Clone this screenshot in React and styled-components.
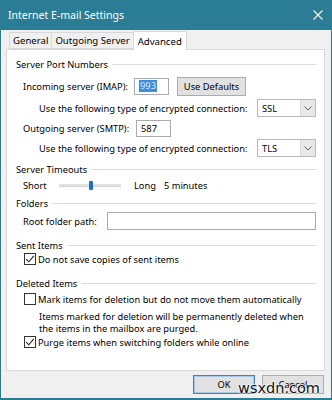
import React from 'react';
import styled, { createGlobalStyle } from 'styled-components';

const GlobalStyle = createGlobalStyle`
  html, body {
    margin: 0;
    padding: 0;
    background: #ffffff;
  }
  * {
    box-sizing: border-box;
  }
`;

const Window = styled.div`
  position: relative;
  width: 332px;
  height: 400px;
  background: #f0f0f0;
  border: 1px solid #2b7d96;
  border-top: none;
  border-bottom-width: 2px;
  font-family: 'Noto Sans', 'Liberation Sans', sans-serif;
  font-size: 9.3px;
  color: #000;
  display: flex;
  flex-direction: column;
  overflow: hidden;
`;

const TitleBar = styled.div`
  height: 30px;
  margin: 0 -1px;
  background: #2b7d96;
  color: #fff;
  display: flex;
  align-items: center;
  justify-content: space-between;
  padding: 0 9px 0 8px;
  font-size: 10.5px;
`;

const Close = styled.svg`
  width: 10px;
  height: 10px;
`;

const Body = styled.div`
  flex: 1;
  padding: 0 6px 0 5px;
  display: flex;
  flex-direction: column;
`;

const TabStrip = styled.div`
  display: flex;
  align-items: flex-end;
  height: 19px;
  padding-left: 3px;
`;

const Tab = styled.div`
  height: ${({ $active }) => ($active ? '19px' : '17px')};
  padding: 0 ${({ $active }) => ($active ? '4px' : '3px')};
  display: flex;
  align-items: center;
  background: ${({ $active }) => ($active ? '#fff' : '#f0f0f0')};
  border: 1px solid #d9d9d9;
  border-bottom: ${({ $active }) => ($active ? 'none' : '1px solid #d9d9d9')};
  margin-left: ${({ $first }) => ($first ? '0' : '-1px')};
  position: relative;
  z-index: ${({ $active }) => ($active ? 2 : 1)};
  margin-bottom: ${({ $active }) => ($active ? '-1px' : '0')};
  font-size: 9.6px;
`;

const Panel = styled.div`
  height: 322px;
  background: #fff;
  border: 1px solid #d9d9d9;
  padding: 6px 8px 0 9px;
  display: flex;
  flex-direction: column;
`;

const Header = styled.div`
  height: 16px;
  margin-top: ${({ $mt }) => $mt || 0}px;
  display: flex;
  align-items: center;
  gap: 4px;
  color: #000;
  white-space: nowrap;

  &::after {
    content: '';
    flex: 1;
    height: 1px;
    background: #dcdcdc;
  }
`;

const Row = styled.div`
  height: ${({ $h }) => $h || 18}px;
  margin-top: ${({ $mt }) => $mt || 0}px;
  padding-left: ${({ $indent }) => $indent || 7}px;
  display: flex;
  align-items: center;
`;

const Label = styled.span`
  width: ${({ $w }) => ($w ? `${$w}px` : 'auto')};
  flex-shrink: 0;
  white-space: nowrap;
`;

const TextBox = styled.div`
  width: ${({ $w }) => ($w ? `${$w}px` : 'auto')};
  flex: ${({ $grow }) => ($grow ? 1 : 'none')};
  height: ${({ $h }) => $h || 17}px;
  border: 1px solid #a9abb2;
  background: #fff;
  display: flex;
  align-items: center;
  padding-left: 4px;
`;

const Selected = styled.span`
  background: #3b8ee0;
  color: #dcebfb;
  padding: 0 1px;
  line-height: 12px;
`;

const Button = styled.div`
  width: ${({ $w }) => $w}px;
  height: ${({ $h }) => $h || 19}px;
  margin-left: ${({ $ml }) => $ml || 0}px;
  background: #e1e1e1;
  border: 1px solid ${({ $default }) => ($default ? '#3d84c6' : '#adadad')};
  box-shadow: ${({ $default }) => ($default ? 'inset 0 0 0 1px #a9c9e8' : 'none')};
  display: flex;
  align-items: center;
  justify-content: center;
`;

const Select = styled.div`
  width: 59px;
  height: 18px;
  margin-left: auto;
  border: 1px solid #b9b9b9;
  background: #fff;
  display: flex;
  align-items: stretch;
`;

const SelectValue = styled.span`
  flex: 1;
  display: flex;
  align-items: center;
  padding-left: 4px;
`;

const SelectArrow = styled.span`
  width: 15px;
  background: #e8e8e8;
  border-left: 1px solid #dadada;
  display: flex;
  align-items: center;
  justify-content: center;
`;

const Track = styled.div`
  position: relative;
  width: 62px;
  height: 3px;
  margin: 0 13px 0 12px;
  background: #e2e2e2;
  border-bottom: 1px solid #d4d4d4;
`;

const Thumb = styled.span`
  position: absolute;
  left: 30px;
  top: -3px;
  width: 4px;
  height: 9px;
  border-radius: 1px;
  background: #1c6fc4;
`;

const Check = styled.div`
  width: 12px;
  height: 12px;
  border: 1px solid #333;
  background: #fff;
  margin-right: 2px;
  display: flex;
  align-items: center;
  justify-content: center;
  flex-shrink: 0;
`;

const Note = styled.div`
  margin-top: ${({ $mt }) => $mt || 0}px;
  padding-left: 23px;
  line-height: 11.5px;
  white-space: nowrap;
`;

const Footer = styled.div`
  display: flex;
  justify-content: flex-end;
  gap: 7px;
  padding: 4px 1px 0 0;
`;

const Watermark = styled.span`
  position: absolute;
  right: 11px;
  bottom: 2px;
  font-family: 'DejaVu Sans', 'Liberation Sans', sans-serif;
  font-size: 14.5px;
  color: #111;
  text-shadow: 0 0 2px #fff, 0 0 2px #fff, 0 0 2px #fff;
`;

const CheckBox = ({ checked }) => (
  <Check>
    {checked && (
      <svg width="10" height="10" viewBox="0 0 10 10">
        <path d="M1.2 5.2 L3.8 7.8 L8.8 1.8" fill="none" stroke="#222" strokeWidth="1.1" />
      </svg>
    )}
  </Check>
);

const Chevron = () => (
  <svg width="8" height="5" viewBox="0 0 8 5">
    <path d="M0.5 0.5 L4 4 L7.5 0.5" fill="none" stroke="#606060" strokeWidth="1" />
  </svg>
);

const EncryptionRow = ({ value, mt }) => (
  <Row $mt={mt} $indent={23}>
    <Label>Use the following type of encrypted connection:</Label>
    <Select>
      <SelectValue>{value}</SelectValue>
      <SelectArrow>
        <Chevron />
      </SelectArrow>
    </Select>
  </Row>
);

const App = () => (
  <>
    <GlobalStyle />
    <Window>
      <TitleBar>
        <span>Internet E-mail Settings</span>
        <Close viewBox="0 0 10 10">
          <path d="M0.5 0.5 L9.5 9.5 M9.5 0.5 L0.5 9.5" stroke="#fff" strokeWidth="1.1" />
        </Close>
      </TitleBar>
      <Body>
        <TabStrip>
          <Tab $first>General</Tab>
          <Tab>Outgoing Server</Tab>
          <Tab $active>Advanced</Tab>
        </TabStrip>
        <Panel>
          <Header>Server Port Numbers</Header>
          <Row $h={20} $mt={4}>
            <Label $w={111}>Incoming server (IMAP):</Label>
            <TextBox $w={35}>
              <Selected>993</Selected>
            </TextBox>
            <Button $w={69} $ml={8}>Use Defaults</Button>
          </Row>
          <EncryptionRow value="SSL" mt={3} />
          <Row $mt={2}>
            <Label $w={113}>Outgoing server (SMTP):</Label>
            <TextBox $w={35}>587</TextBox>
          </Row>
          <EncryptionRow value="TLS" mt={2} />
          <Header $mt={4}>Server Timeouts</Header>
          <Row $h={16}>
            <Label $w={24}>Short</Label>
            <Track>
              <Thumb />
            </Track>
            <Label $w={30}>Long</Label>
            <Label>5 minutes</Label>
          </Row>
          <Header $mt={2}>Folders</Header>
          <Row $mt={1}>
            <Label $w={84}>Root folder path:</Label>
            <TextBox $grow $h={18} />
          </Row>
          <Header $mt={7}>Sent Items</Header>
          <Row $h={14} $mt={-1} $indent={8}>
            <CheckBox checked />
            <Label>Do not save copies of sent items</Label>
          </Row>
          <Header $mt={9}>Deleted Items</Header>
          <Row $h={14} $mt={1} $indent={8}>
            <CheckBox />
            <Label>Mark items for deletion but do not move them automatically</Label>
          </Row>
          <Note $mt={5}>
            Items marked for deletion will be permanently deleted when
            <br />
            the items in the mailbox are purged.
          </Note>
          <Row $h={14} $mt={1} $indent={8}>
            <CheckBox checked />
            <Label>Purge items when switching folders while online</Label>
          </Row>
        </Panel>
        <Footer>
          <Button $w={62} $default>OK</Button>
          <Button $w={62}>Cancel</Button>
        </Footer>
      </Body>
      <Watermark>wsxdn.com</Watermark>
    </Window>
  </>
);

export default App;
